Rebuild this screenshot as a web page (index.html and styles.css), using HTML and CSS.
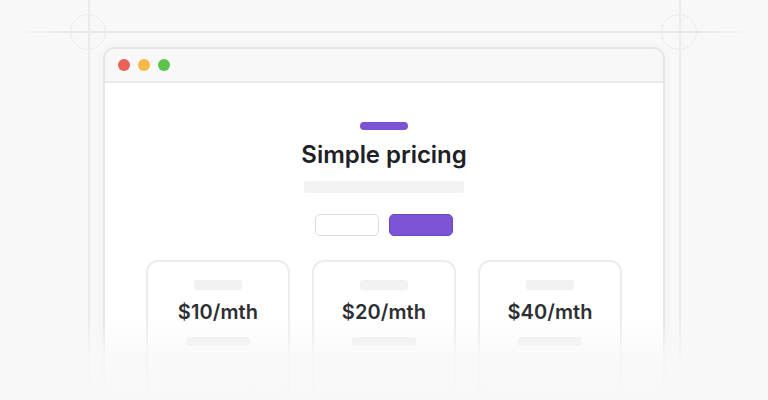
FILE: index.html
```html
<!DOCTYPE html>
<html>
<head>
<meta charset="utf-8">
<link rel="stylesheet" href="styles.css">
</head>
<body>
<div class="guides">
  <div class="hline"></div>
  <div class="vline vl-left"></div>
  <div class="vline vl-right"></div>
  <div class="ring ring-left"></div>
  <div class="ring ring-right"></div>
</div>
<div class="window">
  <div class="titlebar">
    <span class="dot red"></span>
    <span class="dot yellow"></span>
    <span class="dot green"></span>
  </div>
  <div class="content">
    <div class="accent"></div>
    <h1 class="title">Simple pricing</h1>
    <div class="subtitle"></div>
    <div class="toggle">
      <div class="btn btn-light"></div>
      <div class="btn btn-primary"></div>
    </div>
    <div class="cards">
      <div class="card">
        <div class="card-label"></div>
        <div class="price">$10/mth</div>
        <div class="card-line"></div>
      </div>
      <div class="card">
        <div class="card-label"></div>
        <div class="price">$20/mth</div>
        <div class="card-line"></div>
      </div>
      <div class="card">
        <div class="card-label"></div>
        <div class="price">$40/mth</div>
        <div class="card-line"></div>
      </div>
    </div>
  </div>
</div>
<div class="fade"></div>
</body>
</html>
```

FILE: styles.css
```css
html, body {
  margin: 0;
  padding: 0;
  height: 400px;
  overflow: hidden;
}
body {
  background: #f8f8f8;
  font-family: Inter, "Noto Sans", sans-serif;
  position: relative;
}
.guides {
  position: absolute;
  inset: 0;
  pointer-events: none;
}
.hline {
  position: absolute;
  left: 10px;
  right: 10px;
  top: 31px;
  height: 2px;
  background: linear-gradient(90deg, rgba(232,232,232,0) 0, #e9e9e9 60px, #e9e9e9 calc(100% - 60px), rgba(232,232,232,0) 100%);
}
.vline {
  position: absolute;
  top: 0;
  bottom: 0;
  width: 2px;
  background: #ebebeb;
}
.vl-left { left: 88px; }
.vl-right { left: 679px; }
.ring {
  position: absolute;
  top: 14px;
  width: 34px;
  height: 34px;
  border: 1.5px solid #ebebeb;
  border-radius: 50%;
}
.ring-left { left: 70px; }
.ring-right { left: 661px; }
.window {
  position: relative;
  margin: 47px 0 0 103px;
  width: 562px;
  height: 353px;
  border: 2px solid #e6e6e6;
  border-bottom: none;
  border-radius: 12px 12px 0 0;
  background: #ffffff;
  box-shadow: 0 0 10px rgba(0,0,0,0.035);
  overflow: hidden;
  box-sizing: border-box;
}
.titlebar {
  height: 32px;
  background: #f8f8f8;
  border-bottom: 2px solid #e9e9e9;
  display: flex;
  align-items: center;
  gap: 8px;
  padding-left: 13px;
}
.dot {
  width: 12px;
  height: 12px;
  border-radius: 50%;
}
.red { background: #ec6159; }
.yellow { background: #f4b947; }
.green { background: #5ac44d; }
.content {
  display: flex;
  flex-direction: column;
  align-items: center;
  padding-top: 39px;
}
.accent {
  width: 48px;
  height: 8px;
  border-radius: 4px;
  background: #7b54d6;
}
.title {
  margin: 10px 0 0;
  font-size: 24px;
  line-height: 30px;
  font-weight: 600;
  color: #1e2025;
  letter-spacing: -0.05px;
}
.subtitle {
  margin-top: 11px;
  width: 160px;
  height: 12px;
  border-radius: 3px;
  background: #f3f3f3;
}
.toggle {
  margin-top: 21px;
  display: flex;
  gap: 10px;
}
.btn {
  width: 64px;
  height: 22px;
  box-sizing: border-box;
  border-radius: 5px;
}
.btn-light {
  background: #ffffff;
  border: 1px solid #dcdcdc;
}
.btn-primary {
  background: #7b55d6;
  border: 1px solid #6a47c2;
}
.cards {
  margin-top: 24px;
  display: flex;
  gap: 22px;
}
.card {
  width: 144px;
  height: 140px;
  box-sizing: border-box;
  border: 2px solid #ececec;
  border-radius: 12px;
  background: #ffffff;
  display: flex;
  flex-direction: column;
  align-items: center;
  padding-top: 18px;
}
.card-label {
  width: 48px;
  height: 10px;
  border-radius: 3px;
  background: #f2f2f2;
}
.price {
  margin-top: 9px;
  font-size: 20px;
  line-height: 26px;
  font-weight: 600;
  color: #2d2f34;
  letter-spacing: 0.1px;
}
.card-line {
  margin-top: 12px;
  width: 64px;
  height: 9px;
  border-radius: 3px;
  background: #eeeeee;
}
.fade {
  position: absolute;
  left: 0;
  right: 0;
  top: 318px;
  height: 82px;
  background: linear-gradient(180deg, rgba(248,248,248,0) 0%, rgba(248,248,248,0.8) 45%, rgba(248,248,248,0.97) 100%);
  pointer-events: none;
}
```
